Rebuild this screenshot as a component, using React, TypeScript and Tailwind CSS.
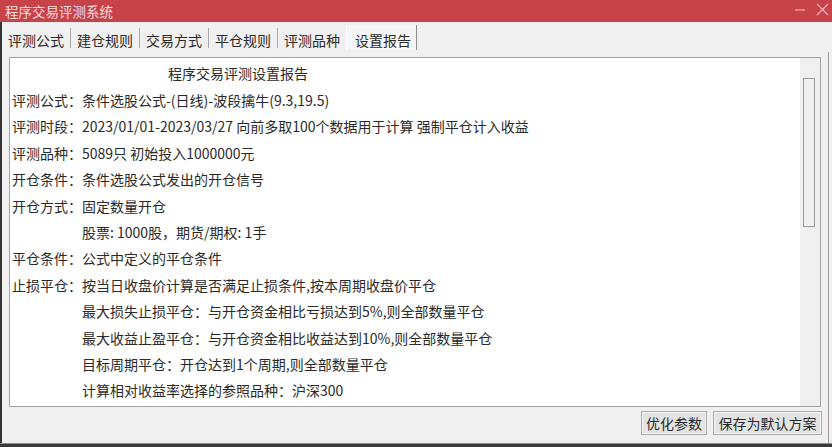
import React from "react";

const rows: { label?: string; text: string; indent?: boolean }[] = [
  { label: "评测公式：", text: "条件选股公式-(日线)-波段擒牛(9.3,19.5)" },
  { label: "评测时段：", text: "2023/01/01-2023/03/27 向前多取100个数据用于计算 强制平仓计入收益" },
  { label: "评测品种：", text: "5089只 初始投入1000000元" },
  { label: "开仓条件：", text: "条件选股公式发出的开仓信号" },
  { label: "开仓方式：", text: "固定数量开仓" },
  { text: "股票: 1000股，期货/期权: 1手", indent: true },
  { label: "平仓条件：", text: "公式中定义的平仓条件" },
  { label: "止损平仓：", text: "按当日收盘价计算是否满足止损条件,按本周期收盘价平仓" },
  { text: "最大损失止损平仓：与开仓资金相比亏损达到5%,则全部数量平仓", indent: true },
  { text: "最大收益止盈平仓：与开仓资金相比收益达到10%,则全部数量平仓", indent: true },
  { text: "目标周期平仓：开仓达到1个周期,则全部数量平仓", indent: true },
  { text: "计算相对收益率选择的参照品种：沪深300", indent: true },
];

const tabs = ["评测公式", "建仓规则", "交易方式", "平仓规则", "评测品种"];

export default function App() {
  return (
    <div className="w-[832px] h-[447px] bg-[#2f2f2f] flex flex-col overflow-hidden font-['Noto_Sans_CJK_SC',sans-serif] text-[14px] text-[#2a2a2a]">
      {/* title bar */}
      <div className="h-[22px] shrink-0 bg-[#c8424a] flex items-center pl-[5px] text-[#f6dcdd]">
        <span className="flex-1 leading-[16px] text-[13.5px]">程序交易评测系统</span>
        <svg width="12" height="12" viewBox="0 0 12 12" className="mr-[10px] mb-[6px]">
          <line x1="1" y1="8" x2="11" y2="8" stroke="#eeb2b5" strokeWidth="1.2" />
        </svg>
        <svg width="13" height="13" viewBox="0 0 13 13" className="mr-[3px] mb-[3px]">
          <line x1="1" y1="1" x2="12" y2="12" stroke="#eeb2b5" strokeWidth="1.2" />
          <line x1="12" y1="1" x2="1" y2="12" stroke="#eeb2b5" strokeWidth="1.2" />
        </svg>
      </div>

      <div className="flex-1 flex min-h-0">
        <div className="w-[2px] bg-[#343434]" />
        <div className="flex-1 bg-[#f0f0f0] flex flex-col">
          {/* tab bar */}
          <div className="h-[28px] shrink-0 flex items-start">
            {tabs.map((t, i) => (
              <React.Fragment key={t}>
                <div className="px-[6px] h-[28px] pt-[8px] flex items-center leading-[16px] whitespace-nowrap">{t}</div>
                {i < tabs.length - 1 && <div className="w-px h-[20px] mt-[6px] bg-[#a8a8a8]" />}
              </React.Fragment>
            ))}
            <div className="mt-[3px] h-[25px] pl-[8px] pr-[5px] border-l border-l-white border-r border-r-[#8e8e8e] bg-[#f6f6f6] pt-[5px] flex items-center leading-[16px] whitespace-nowrap">
              设置报告
            </div>
          </div>

          <div className="flex-1 flex min-h-0">
            <div className="flex-1 flex flex-col">
              {/* report box */}
              <div className="mt-[7px] ml-[7px] w-[812px] h-[350px] border border-[#a3a3a3] bg-white flex">
                <div className="flex-1 pl-[2px] pt-[1px] overflow-hidden">
                  <div className="h-[28px] leading-[28px] pl-[156px] whitespace-nowrap">程序交易评测设置报告</div>
                  {rows.map((r, i) => (
                    <div key={i} className={`h-[26.4px] leading-[26.4px] whitespace-nowrap ${r.indent ? "pl-[70px]" : ""}`}>
                      {r.label}
                      {r.text}
                    </div>
                  ))}
                </div>
                <div className="w-[20px] bg-[#f0f0f0] pt-[20px] pl-[3px]">
                  <div className="w-[12px] h-[149px] border border-[#9a9a9a] bg-[#f0f0f0]" />
                </div>
              </div>

              {/* buttons */}
              <div className="mt-[4px] flex justify-end gap-[6px] pr-[6px]">
                <button className="w-[66px] h-[24px] border border-[#a9a9a9] bg-[#e3e3e3] shadow-[inset_0_0_0_1px_#f4f4f4] flex items-center justify-center leading-[16px] text-[#2a2a2a]">
                  优化参数
                </button>
                <button className="w-[109px] h-[24px] border border-[#a9a9a9] bg-[#e3e3e3] shadow-[inset_0_0_0_1px_#f4f4f4] flex items-center justify-center leading-[16px] text-[#2a2a2a]">
                  保存为默认方案
                </button>
              </div>
            </div>
            <div className="w-px mt-[2px] bg-[#9c9c9c]" />
            <div className="w-[3px]" />
          </div>
        </div>
      </div>
      <div className="h-[4px] shrink-0 bg-[#3a3a3a] border-t border-t-[#8a8a8a]" />
    </div>
  );
}
